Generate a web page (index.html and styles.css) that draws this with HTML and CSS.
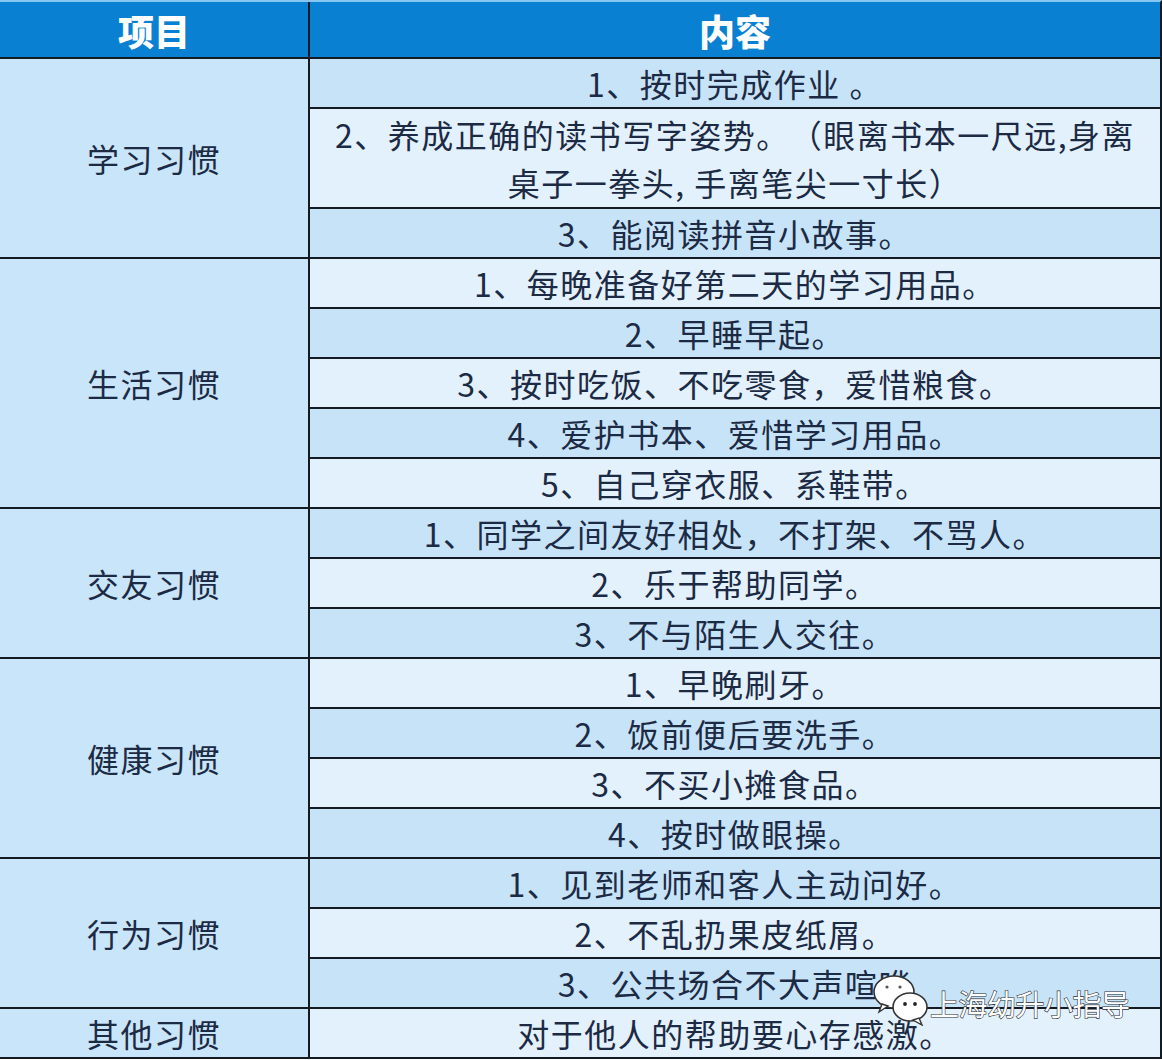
FILE: index.html
```html
<!DOCTYPE html>
<html lang="zh-CN">
<head>
<meta charset="utf-8">
<title>习惯养成</title>
<link rel="stylesheet" href="styles.css">
</head>
<body>
<div class="page">
  <div class="grid">
    <div class="hd">项目</div>
    <div class="hd">内容</div>

    <div class="cat span4">学习习惯</div>
    <div class="c b">1、按时完成作业 。</div>
    <div class="c l span2 two">2、养成正确的读书写字姿势。（眼离书本一尺远,身离<br>桌子一拳头, 手离笔尖一寸长）</div>
    <div class="c b">3、能阅读拼音小故事。</div>

    <div class="cat span5">生活习惯</div>
    <div class="c l">1、每晚准备好第二天的学习用品。</div>
    <div class="c b">2、早睡早起。</div>
    <div class="c l">3、按时吃饭、不吃零食，爱惜粮食。</div>
    <div class="c b">4、爱护书本、爱惜学习用品。</div>
    <div class="c l">5、自己穿衣服、系鞋带。</div>

    <div class="cat span3">交友习惯</div>
    <div class="c b">1、同学之间友好相处，不打架、不骂人。</div>
    <div class="c l">2、乐于帮助同学。</div>
    <div class="c b">3、不与陌生人交往。</div>

    <div class="cat span4">健康习惯</div>
    <div class="c l">1、早晚刷牙。</div>
    <div class="c b">2、饭前便后要洗手。</div>
    <div class="c l">3、不买小摊食品。</div>
    <div class="c b">4、按时做眼操。</div>

    <div class="cat span3">行为习惯</div>
    <div class="c b">1、见到老师和客人主动问好。</div>
    <div class="c l">2、不乱扔果皮纸屑。</div>
    <div class="c b">3、公共场合不大声喧哗</div>

    <div class="cat">其他习惯</div>
    <div class="c l">对于他人的帮助要心存感激。</div>
  </div>

  <div class="mark">
    <svg class="wx" width="58" height="52" viewBox="0 0 58 52">
      <ellipse cx="22" cy="18" rx="20" ry="16" fill="#fff" stroke="#333" stroke-width="1.6"/>
      <path d="M10 30 L7 38 L16 32 Z" fill="#fff" stroke="#333" stroke-width="1.4"/>
      <circle cx="15" cy="13" r="1.6" fill="#555"/>
      <circle cx="28" cy="13" r="1.6" fill="#555"/>
      <ellipse cx="38" cy="33" rx="17" ry="14" fill="#fff" stroke="#333" stroke-width="1.6"/>
      <path d="M47 44 L50 51 L41 46 Z" fill="#fff" stroke="#333" stroke-width="1.4"/>
      <circle cx="33" cy="30" r="1.9" fill="#222"/>
      <circle cx="43" cy="30" r="1.9" fill="#222"/>
    </svg>
    <span class="mark-text">上海幼升小指导</span>
  </div>
</div>
</body>
</html>
```

FILE: styles.css
```css
html, body {
  margin: 0;
  padding: 0;
  background: #ffffff;
}

.page {
  position: relative;
  width: 1162px;
  height: 1060px;
  font-family: "Noto Sans CJK SC", "Noto Sans", sans-serif;
  text-spacing-trim: space-all;
}

.grid {
  display: grid;
  grid-template-columns: 308px 850px;
  grid-template-rows: 55px;
  grid-auto-rows: 48px;
  gap: 2px;
  background: #141a22;
  border-top: 2px solid #86c6f0;
  border-right: 2px solid #141a22;
  border-bottom: 2px solid #141a22;
  width: 1160px;
}

.hd {
  background: #0a80d2;
  color: #ffffff;
  font-size: 36px;
  font-weight: 900;
  display: flex;
  align-items: center;
  justify-content: center;
}

.cat {
  background: #c9e5f9;
  color: #1c2a44;
  font-size: 32px;
  letter-spacing: 1.5px;
  display: flex;
  align-items: center;
  justify-content: center;
}

.span2 { grid-row: span 2; }
.span3 { grid-row: span 3; }
.span4 { grid-row: span 4; }
.span5 { grid-row: span 5; }

.c {
  color: #1c2a44;
  font-size: 32px;
  letter-spacing: 1.5px;
  display: flex;
  align-items: center;
  justify-content: center;
  text-align: center;
  line-height: 48px;
  white-space: nowrap;
}

.c.b { background: #c7e3f8; }
.c.l { background: #e3f1fc; }

.mark {
  position: absolute;
  left: 872px;
  top: 974px;
  display: flex;
  align-items: center;
  gap: 0;
}

.mark-text {
  color: #ffffff;
  font-size: 29px;
  font-weight: 400;
  -webkit-text-stroke: 1.2px #2a2f36;
  paint-order: stroke fill;
  letter-spacing: -0.5px;
  margin-top: 6px;
}
```
